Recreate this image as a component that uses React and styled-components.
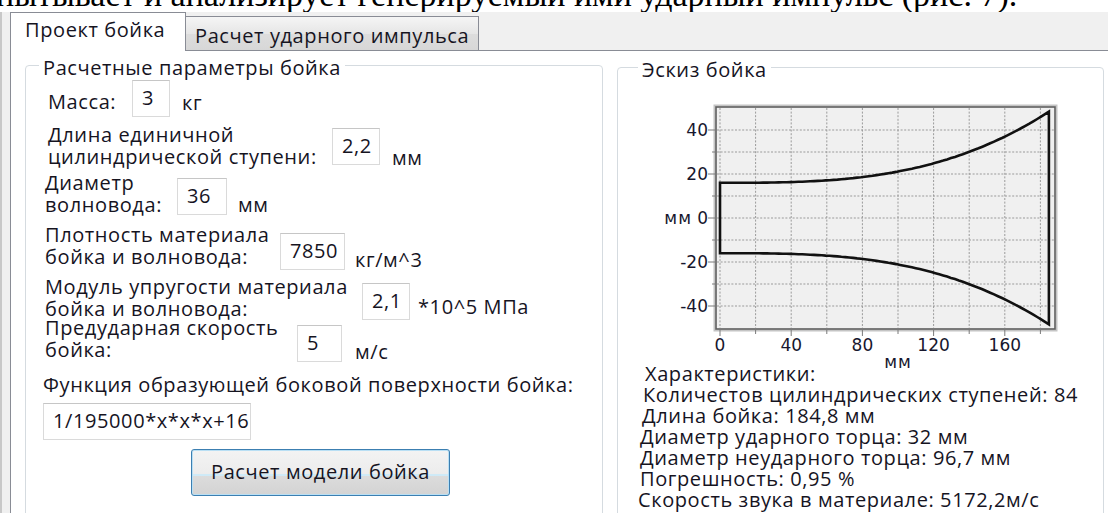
import React from "react";
import styled, { createGlobalStyle } from "styled-components";

const ui = `"Open Sans", "Noto Sans", "DejaVu Sans", sans-serif`;
const ink = "#16141f";

const GlobalStyle = createGlobalStyle`
  html, body {
    margin: 0;
    padding: 0;
    background: #ffffff;
  }
  body {
    width: 1108px;
    height: 513px;
    overflow: hidden;
    font-family: ${ui};
    color: ${ink};
  }
`;

/* strip of document text above the window */
const Caption = styled.div`
  height: 12px;
  overflow: hidden;
  white-space: nowrap;
  font-family: "Liberation Serif", "Times New Roman", serif;
  font-size: 34px;
  line-height: 34px;
  color: #000;
`;

const CaptionLine = styled.div`
  margin: -22px 0 0 -4px;
`;

const Window = styled.div`
  display: flex;
  height: 501px;
  background: #f0f0f0;
  border-left: 2px solid #c8c8c8;
  padding-left: 8px;
`;

const TabControl = styled.div`
  flex: 1;
  display: flex;
  flex-direction: column;
`;

const TabStrip = styled.div`
  display: flex;
  align-items: flex-end;
  height: 38px;
`;

const Tab = styled.div`
  box-sizing: border-box;
  position: relative;
  z-index: ${(p) => (p.$active ? 1 : 0)};
  width: ${(p) => p.$width}px;
  height: ${(p) => (p.$active ? 39 : 34)}px;
  margin-bottom: ${(p) => (p.$active ? -1 : 0)}px;
  padding: ${(p) => (p.$active ? "6px 0 0 14px" : "8px 0 0 9px")};
  border: 1px solid #898c95;
  border-bottom: none;
  border-left: ${(p) => (p.$active ? "1px solid #898c95" : "none")};
  background: ${(p) =>
    p.$active ? "#ffffff" : "linear-gradient(#f5f5f5, #e6e6e6 50%, #dddddd 51%, #d7d7d7)"};
  font-size: 20px;
  line-height: 22px;
  letter-spacing: 0.6px;
  white-space: nowrap;
`;

const TabPage = styled.div`
  flex: 1;
  display: flex;
  gap: 14px;
  padding-left: 14px;
  background: #ffffff;
  border-top: 1px solid #898c95;
  border-left: 1px solid #898c95;
  overflow: hidden;
`;

const Group = styled.fieldset`
  box-sizing: border-box;
  flex: none;
  width: ${(p) => p.$width}px;
  height: 480px;
  min-width: 0;
  margin: ${(p) => p.$top}px 0 0;
  padding: 0;
  border: 1px solid #d5dbe0;
  border-radius: 4px;
`;

const GroupTitle = styled.legend`
  box-sizing: border-box;
  height: 22px;
  margin-left: ${(p) => p.$indent}px;
  padding: 6px 4px 0;
  font-size: 20px;
  line-height: 16px;
  letter-spacing: 0.6px;
  white-space: nowrap;
`;

const Field = styled.div`
  display: flex;
  align-items: flex-start;
  height: ${(p) => p.$height}px;
  padding-left: ${(p) => p.$indent}px;
  margin-top: ${(p) => p.$gap || 0}px;
`;

const Label = styled.div`
  flex: none;
  width: ${(p) => p.$width}px;
  margin-top: ${(p) => p.$dy || 0}px;
  font-size: 20px;
  line-height: 22px;
  letter-spacing: 0.6px;
  white-space: pre;
`;

const TextBox = styled.input`
  box-sizing: border-box;
  display: block;
  flex: none;
  width: ${(p) => p.$width}px;
  height: 37px;
  margin: ${(p) => p.$dy || 0}px 0 0 ${(p) => p.$indent || 0}px;
  padding: 0 0 2px 9px;
  border: 1px solid #dadada;
  border-top-color: #c6c6c6;
  border-radius: 0;
  background: #ffffff;
  font-family: ${ui};
  font-size: 20px;
  letter-spacing: 0.6px;
  color: ${ink};
  outline: none;
`;

const Unit = styled.div`
  flex: none;
  margin: ${(p) => p.$dy}px 0 0 ${(p) => p.$gap}px;
  font-size: 20px;
  line-height: 22px;
  letter-spacing: 0.6px;
  white-space: nowrap;
`;

const Note = styled.div`
  margin: ${(p) => p.$gap}px 0 0 ${(p) => p.$indent}px;
  font-size: 20px;
  line-height: 22px;
  letter-spacing: 0.6px;
  white-space: nowrap;
`;

const Button = styled.button`
  display: block;
  box-sizing: border-box;
  width: 259px;
  height: 47px;
  margin: 9px 0 0 165px;
  padding: 0 0 3px;
  border: 1px solid #3c7fb1;
  border-radius: 3px;
  background: linear-gradient(
    #f3f3f3 0%,
    #ececec 54%,
    #cfeaf7 54%,
    #cfeaf7 58%,
    #dcdcdc 58%,
    #d3d3d3 100%
  );
  box-shadow: inset 0 0 0 1px #b9dff4;
  font-family: ${ui};
  font-size: 20px;
  letter-spacing: 0.6px;
  color: ${ink};
`;

const Chart = styled.svg`
  display: block;
  margin: 22px 0 0 32px;
  overflow: visible;
  font-family: "DejaVu Sans", "Liberation Sans", sans-serif;
  font-size: 17px;
`;

const Stats = styled.div`
  margin-left: 20px;
  font-size: 20px;
  line-height: 21px;
  letter-spacing: 0.6px;
  white-space: nowrap;
`;

const StatLine = styled.div`
  padding-left: ${(p) => p.$indent}px;
`;

const fields = [
  { label: "Масса:", value: "3", unit: "кг", indent: 22, height: 44, labelWidth: 84, labelDy: 11, box: 38, boxDy: 0, unitGap: 12, unitDy: 12, gap: 4 },
  { label: "Длина единичной\nцилиндрической ступени:", value: "2,2", unit: "мм", indent: 22, height: 48, labelWidth: 284, box: 48, boxDy: 4, unitGap: 12, unitDy: 23 },
  { label: "Диаметр\nволновода:", value: "36", unit: "мм", indent: 19, height: 52, labelWidth: 132, box: 50, boxDy: 6, unitGap: 11, unitDy: 22 },
  { label: "Плотность материала\nбойка и волновода:", value: "7850", unit: "кг/м^3", indent: 19, height: 52, labelWidth: 235, box: 65, boxDy: 9, unitGap: 10, unitDy: 25 },
  { label: "Модуль упругости материала\nбойка и волновода:", value: "2,1", unit: "*10^5 МПа", indent: 19, height: 41, labelWidth: 317, box: 48, boxDy: 7, unitGap: 8, unitDy: 20 },
  { label: "Предударная скорость\nбойка:", value: "5", unit: "м/с", indent: 19, height: 45, labelWidth: 252, box: 45, boxDy: 8, unitGap: 13, unitDy: 24 },
];

const stats = [
  { text: "Характеристики:", indent: 7 },
  { text: "Количестов цилиндрических ступеней: 84", indent: 5 },
  { text: "Длина бойка: 184,8 мм", indent: 4 },
  { text: "Диаметр ударного торца: 32 мм", indent: 2 },
  { text: "Диаметр неударного торца: 96,7 мм", indent: 2 },
  { text: "Погрешность: 0,95 %", indent: 2 },
  { text: "Скорость звука в материале: 5172,2м/с", indent: 0 },
];

// plot scale: 1.78 px per mm along the axis, 2.2 px per mm across it
const px = (u) => 70 + u * 1.78;
const py = (v) => 118 - v * 2.2;
const radius = (u) => (u * u * u) / 195000 + 16;

function StrikerSketch() {
  const steps = 84;
  const length = 184.8;
  const top = [];
  for (let i = 0; i <= steps; i++) {
    const u = (length * i) / steps;
    top.push([px(u), py(radius(u))]);
  }
  const bottom = top.map(([x, y]) => [x, 236 - y]).reverse();
  const outline =
    "M" +
    [...top, ...bottom].map(([x, y]) => `${x.toFixed(1)},${y.toFixed(1)}`).join(" L") +
    " Z";

  const columns = [0, 20, 40, 60, 80, 100, 120, 140, 160, 180];
  const rows = [40, 30, 20, 10, 0, -10, -20, -30, -40];

  return (
    <Chart width="420" height="263" viewBox="0 0 420 263">
      <rect x="64.5" y="5.5" width="342" height="225" fill="none" stroke="#c4c4c4" strokeWidth="2" />
      <rect x="66" y="7" width="339" height="222" fill="#f0f0f0" stroke="#5e5e5e" strokeWidth="1.6" />

      {columns.map((u) => (
        <line key={`c${u}`} x1={px(u)} x2={px(u)} y1="8" y2="228" stroke="#9a9a9a" strokeWidth="1" strokeDasharray="2 1.6" />
      ))}
      {rows.map((v) => (
        <line key={`r${v}`} x1="67" x2="404" y1={py(v)} y2={py(v)} stroke="#9a9a9a" strokeWidth="1" strokeDasharray="2 1.6" />
      ))}

      {rows.map((v) => (
        <line key={`t${v}`} x1={v % 20 === 0 ? 58 : 62} x2="65" y1={py(v)} y2={py(v)} stroke="#7a7a7a" strokeWidth="1" />
      ))}
      {columns.map((u) => (
        <line key={`b${u}`} x1={px(u)} x2={px(u)} y1="230" y2={u % 40 === 0 ? 236 : 234} stroke="#7a7a7a" strokeWidth="1" />
      ))}

      <path d={outline} fill="none" stroke="#111111" strokeWidth="2.6" strokeLinejoin="miter" />

      <g fill="#17172e">
        {[40, 20, 0, -20, -40].map((v) => (
          <text key={`y${v}`} x="58" y={py(v) + 6.2} textAnchor="end">
            {v}
          </text>
        ))}
        <text x="42" y={py(0) + 6.2} textAnchor="end" letterSpacing="1">
          мм
        </text>
        {[0, 40, 80, 120, 160].map((u) => (
          <text key={`x${u}`} x={px(u)} y="251" textAnchor="middle">
            {u}
          </text>
        ))}
        <text x="248" y="268" textAnchor="middle" letterSpacing="1">
          мм
        </text>
      </g>
    </Chart>
  );
}

export default function App() {
  return (
    <>
      <GlobalStyle />
      <Caption>
        <CaptionLine>пытывает и анализирует генерируемый ими ударный импульс (рис. 7).</CaptionLine>
      </Caption>
      <Window>
        <TabControl>
          <TabStrip>
            <Tab $active $width={176}>Проект бойка</Tab>
            <Tab $width={293}>Расчет ударного импульса</Tab>
          </TabStrip>
          <TabPage>
            <Group $width={578} $top={3}>
              <GroupTitle $indent={13}>Расчетные параметры бойка</GroupTitle>
              {fields.map((f) => (
                <Field key={f.value} $height={f.height} $indent={f.indent} $gap={f.gap}>
                  <Label $width={f.labelWidth} $dy={f.labelDy}>
                    {f.label}
                  </Label>
                  <TextBox readOnly value={f.value} $width={f.box} $dy={f.boxDy} />
                  <Unit $gap={f.unitGap} $dy={f.unitDy}>
                    {f.unit}
                  </Unit>
                </Field>
              ))}
              <Note $gap={12} $indent={17}>
                Функция образующей боковой поверхности бойка:
              </Note>
              <TextBox readOnly value="1/195000*x*x*x+16" $width={208} $dy={7} $indent={17} />
              <Button type="button">Расчет модели бойка</Button>
            </Group>
            <Group $width={487} $top={5}>
              <GroupTitle $indent={20}>Эскиз бойка</GroupTitle>
              <StrikerSketch />
              <Stats>
                {stats.map((s) => (
                  <StatLine key={s.text} $indent={s.indent}>
                    {s.text}
                  </StatLine>
                ))}
              </Stats>
            </Group>
          </TabPage>
        </TabControl>
      </Window>
    </>
  );
}
